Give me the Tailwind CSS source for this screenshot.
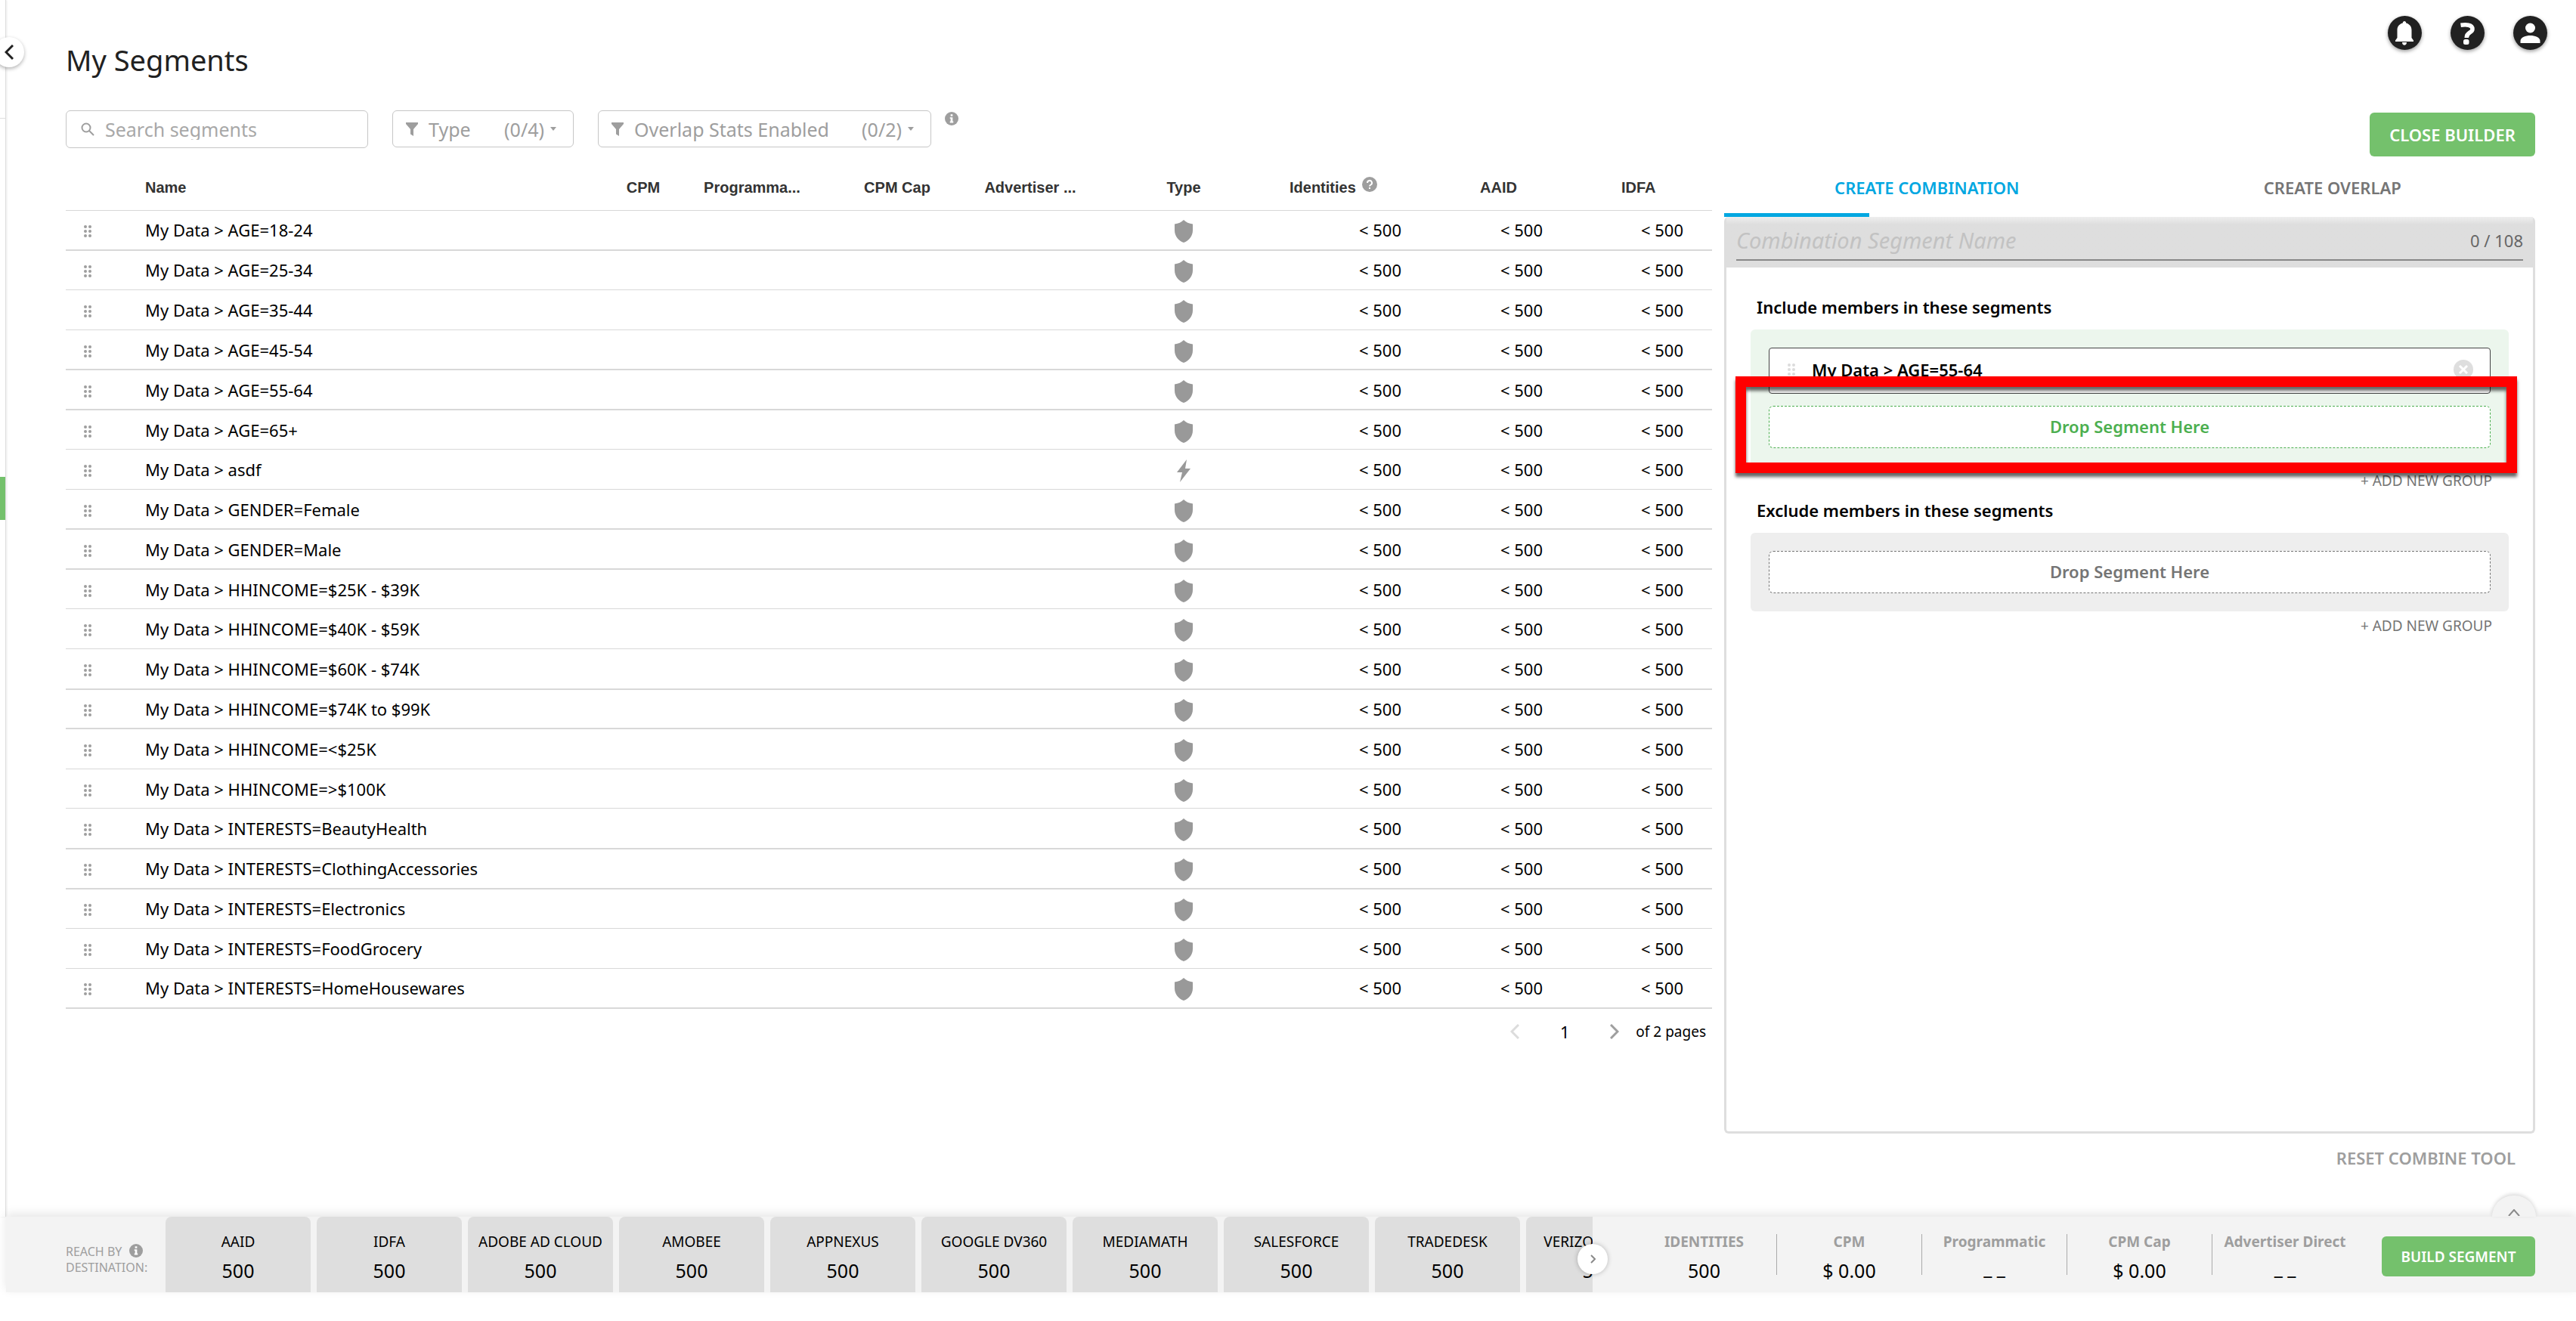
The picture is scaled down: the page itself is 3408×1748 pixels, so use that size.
<!DOCTYPE html>
<html lang="en">
<head>
  <meta charset="UTF-8" />
  <meta name="viewport" content="width=device-width, initial-scale=1" />
  <title>My Segments</title>
  <script src="https://cdn.jsdelivr.net/npm/@tailwindcss/browser@4"></script>
</head>
<body class="bg-white text-black font-['Noto_Sans','Open_Sans',sans-serif] text-[22px] leading-[30px] min-h-screen flex flex-col">

  <!-- shared icons -->
  <svg class="hidden">
    <symbol id="drag" viewBox="0 0 10 16"><circle cx="2" cy="2" r="2"/><circle cx="8" cy="2" r="2"/><circle cx="2" cy="8" r="2"/><circle cx="8" cy="8" r="2"/><circle cx="2" cy="14" r="2"/><circle cx="8" cy="14" r="2"/></symbol>
    <symbol id="shield" viewBox="0 0 24 30"><path d="M12 0c3 3 7 5 12 5.500v8c0 8-5 14-12 16.500C5 27.500 0 21.500 0 13.500v-8C5 5 9 3 12 0z"/></symbol>
    <symbol id="bolt" viewBox="0 0 20 30"><path d="M14 0L1 17h7L5 30l14-18h-7z"/></symbol>
    <symbol id="funnel" viewBox="0 0 16 18"><path d="M0 0h16v2l-6 7v9l-4-2.500V9L0 2z"/></symbol>
    <symbol id="info" viewBox="0 0 20 20"><circle cx="10" cy="10" r="10"/><path fill="#fff" d="M8.500 3.500h3v3h-3zM7.500 8h4v6h1v2h-5v-2h1v-4h-1z"/></symbol>
  </svg>

  <div class="flex flex-1">
    <!-- collapsed sidebar -->
    <aside class="relative w-2 shrink-0 border-r border-[#dedede] bg-white shadow-[1px_0_3px_rgba(0,0,0,.08)]">
      <button aria-label="Expand menu" class="absolute -left-2 top-[49px] size-10 rounded-full bg-white shadow-[0_2px_5px_rgba(0,0,0,.3)]">
        <svg class="absolute left-[14px] top-[10px] w-3 h-5" viewBox="0 0 12 20" fill="none" stroke="#212121" stroke-width="3"><path d="M11 1L2 10l9 9"/></svg>
      </button>
      <div class="absolute left-0 top-[156px] w-[7px] h-px bg-[#dedede]"></div>
      <div class="absolute left-0 top-[631px] w-[7px] h-[57px] bg-[#74c16c]"></div>
    </aside>

    <main class="flex-1 flex gap-4 pl-[79px] pr-[54px]">
      <!-- segment list -->
      <section class="flex-1 min-w-0 pt-[52px]">
        <h1 class="text-[38px] leading-[54px] text-[#212121]">My Segments</h1>

        <div class="flex items-start gap-8 mt-10 text-[#9e9e9e] text-[25px] leading-[28px]">
          <label class="flex items-center w-[400px] h-[50px] border border-[#c6c6c6] rounded-md pl-[19px]">
            <svg class="w-[18px] h-[18px] shrink-0" viewBox="0 0 18 18" fill="none" stroke="#9e9e9e" stroke-width="2"><circle cx="7" cy="7" r="5.500"/><path d="M11 11l6 6"/></svg>
            <input type="text" aria-label="Search segments" placeholder="Search segments" class="ml-[14px] w-full outline-none placeholder:text-[#a8a8a8]">
          </label>
          <button class="flex items-center w-[240px] h-[49px] border border-[#c6c6c6] rounded-md pl-[17px]">
            <svg class="w-4 h-[18px]" fill="#9e9e9e"><use href="#funnel"/></svg>
            <span class="ml-[14px]">Type</span>
            <span class="ml-auto">(0/4)</span>
            <svg class="w-2 h-[5px] ml-2 mr-[22px]" fill="#9e9e9e" viewBox="0 0 8 5"><path d="M0 0h8L4 5z"/></svg>
          </button>
          <div class="flex items-start gap-[18px]">
            <button class="flex items-center w-[441px] h-[49px] border border-[#c6c6c6] rounded-md pl-[17px]">
              <svg class="w-4 h-[18px]" fill="#9e9e9e"><use href="#funnel"/></svg>
              <span class="ml-[14px]">Overlap Stats Enabled</span>
              <span class="ml-auto">(0/2)</span>
              <svg class="w-2 h-[5px] ml-2 mr-[22px]" fill="#9e9e9e" viewBox="0 0 8 5"><path d="M0 0h8L4 5z"/></svg>
            </button>
            <svg class="size-[18px] mt-[2px]" fill="#9e9e9e"><use href="#info"/></svg>
          </div>
        </div>

        <table class="w-full table-fixed mt-[22px] h-[1117px]">
          <colgroup>
            <col class="w-[105px]"><col><col class="w-[130px]"><col class="w-[158px]"><col class="w-[226px]"><col class="w-[126px]"><col class="w-[264px]"><col class="w-[187px]"><col class="w-[187px]"><col class="w-[201px]">
          </colgroup>
          <thead class="font-['Liberation_Sans',sans-serif] text-[20px] text-[#333] whitespace-nowrap">
            <tr class="h-[60px] border-b border-[#d8d8d8]">
              <th></th>
              <th class="text-left">Name</th>
              <th>CPM</th>
              <th>Programma...</th>
              <th>CPM Cap</th>
              <th>Advertiser ...</th>
              <th class="pl-4">Type</th>
              <th class="pl-4">
                <span class="flex items-center gap-2">Identities
                  <svg class="size-5 mb-2" viewBox="0 0 20 20"><circle cx="10" cy="10" r="10" fill="#9e9e9e"/><path d="M7 8a3 3 0 1 1 4.500 2.500Q10 11.500 10 12.500M10 14v2" fill="none" stroke="#fff" stroke-width="2"/></svg>
                </span>
              </th>
              <th class="text-left pl-[81px]">AAID</th>
              <th class="text-left pl-[81px]">IDFA</th>
            </tr>
          </thead>
          <tbody id="rows"></tbody>
        </table>

        <div class="flex items-center justify-end mt-[15px] pr-2">
          <button aria-label="Previous page"><svg class="w-3 h-5" viewBox="0 0 12 20" fill="none" stroke="#dcdcdc" stroke-width="3"><path d="M11 1L2 10l9 9"/></svg></button>
          <span class="w-[120px] text-center">1</span>
          <button aria-label="Next page"><svg class="w-3 h-5" viewBox="0 0 12 20" fill="none" stroke="#9e9e9e" stroke-width="3"><path d="M1 1l9 9-9 9"/></svg></button>
          <span class="ml-[22px] text-[19px]">of 2 pages</span>
        </div>
      </section>

      <!-- builder -->
      <section class="w-[1073px] shrink-0 flex flex-col">
        <div class="flex justify-end gap-[38px] pt-[21px] -mr-4">
          <button aria-label="Notifications" class="size-[45px] rounded-full bg-[#212121] shadow-[0_2px_5px_rgba(0,0,0,.4)]">
            <svg class="size-full" viewBox="0 0 45 45" fill="#fff"><path d="M22 7c1.300 0 2.200 1 2.200 2.500 5 1.300 7.300 5 7.300 9.500v10l2.500 3.500V34H10v-1.500l2.500-3.500V19c0-4.500 2.300-8.200 7.300-9.500C19.800 8 20.700 7 22 7zM19 35h6c0 5-6 5-6 0z"/></svg>
          </button>
          <button aria-label="Help" class="size-[45px] rounded-full bg-[#212121] shadow-[0_2px_5px_rgba(0,0,0,.4)]">
            <svg class="size-full" viewBox="0 0 45 45"><path d="M13.500 12.300c6.500-1 15.500-1 15.500 5.200 0 5.500-7.800 3.500-7.800 11.500" fill="none" stroke="#fff" stroke-width="5.500"/><rect x="17" y="31" width="7.500" height="7" rx="2.500" fill="#fff"/></svg>
          </button>
          <button aria-label="Account" class="size-[45px] rounded-full bg-[#212121] shadow-[0_2px_5px_rgba(0,0,0,.4)]">
            <svg class="size-full" viewBox="0 0 45 45" fill="#fff"><circle cx="22.500" cy="16" r="6.500"/><path d="M9.500 36v-3c0-4.500 7-7 13-7s13 2.500 13 7v3z"/></svg>
          </button>
        </div>
        <button class="self-end mt-[83px] w-[219px] h-[58px] rounded-md bg-[#74c16c] text-white font-semibold">CLOSE BUILDER</button>

        <div class="flex mt-[10px] h-[70px] font-semibold">
          <button class="relative flex-1 text-[#00a7e1] pb-2">CREATE COMBINATION<span class="absolute left-0 bottom-0 w-[192px] h-[5px] bg-[#00a7e1]"></span></button>
          <button class="flex-1 text-[#757575] pb-2">CREATE OVERLAP</button>
        </div>

        <div class="h-[1213px] border-3 border-t-0 border-[#dedede] rounded-md">
          <div class="h-[67px] bg-linear-to-b from-[#eee] to-[#dedede] to-15% px-[13px] pt-[11px]">
            <div class="flex items-center h-[47px] border-b-2 border-[#888] pb-[6px]">
              <input type="text" aria-label="Combination Segment Name" placeholder="Combination Segment Name" class="flex-1 outline-none italic text-[29px] leading-[38px] placeholder:text-[#c2c2c2]">
              <span class="text-[#666]">0 / 108</span>
            </div>
          </div>

          <div class="px-8 pt-[37px]">
            <h2 class="font-semibold px-2">Include members in these segments</h2>
            <div class="relative mt-[15px] rounded-md bg-[#ecf6ed] p-6 flex flex-col gap-4">
              <div class="flex items-center h-[61px] border border-[#444] rounded-sm bg-white pl-6 pr-[22px] pb-1">
                <svg class="w-[10px] h-4" fill="#dcdcdc"><use href="#drag"/></svg>
                <span class="flex-1 ml-[22px] font-semibold">My Data &gt; AGE=55-64</span>
                <button aria-label="Remove segment"><svg class="size-[26px]" viewBox="0 0 26 26"><circle cx="13" cy="13" r="13" fill="#dedede"/><path d="M8 8l10 10M18 8L8 18" stroke="#fff" stroke-width="3"/></svg></button>
              </div>
              <div class="flex items-center justify-center h-14 border border-dashed border-[#4caf50] rounded-md bg-white text-[#4caf50] font-semibold pb-[2px]">Drop Segment Here</div>
              <!-- highlight over the drop zone -->
              <div class="absolute -left-5 -right-[11px] top-[62px] h-[128px] border-14 border-[#f00] shadow-[0_5px_4px_rgba(0,0,0,.6),inset_0_5px_4px_rgba(0,0,0,.6)]"></div>
            </div>
            <div class="flex justify-end mt-1 px-[22px]"><button class="text-[19px] text-[#757575]">+ ADD NEW GROUP</button></div>

            <h2 class="font-semibold px-2 mt-[9px]">Exclude members in these segments</h2>
            <div class="mt-[15px] rounded-md bg-[#eee] p-6">
              <div class="flex items-center justify-center h-14 border border-dashed border-[#757575] rounded-md bg-white text-[#757575] font-semibold pb-[2px]">Drop Segment Here</div>
            </div>
            <div class="flex justify-end mt-1 px-[22px]"><button class="text-[19px] text-[#757575]">+ ADD NEW GROUP</button></div>
          </div>
        </div>
        <button class="self-end mt-[17px] mr-[26px] font-semibold text-[#9e9e9e]">RESET COMBINE TOOL</button>
      </section>
    </main>
  </div>

  <!-- reach footer -->
  <footer class="relative h-[100px] ml-2 mb-[38px] flex bg-[#f3f3f3] shadow-[0_-4px_12px_rgba(0,0,0,.1)]">
    <button aria-label="Expand summary" class="absolute right-[53px] -top-7 w-[58px] h-7 rounded-t-full bg-[#f3f3f3] shadow-[0_-2px_5px_rgba(0,0,0,.15)]">
      <svg class="absolute left-[21px] top-[18px] w-4 h-[9px]" viewBox="0 0 16 9" fill="none" stroke="#8a8a8a" stroke-width="2"><path d="M1 9l7-8 7 8"/></svg>
    </button>
    <div class="w-[211px] shrink-0 pl-[79px] pt-9 text-[16px] leading-[21px] text-[#9e9e9e]">
      <div class="flex gap-[10px]">REACH BY <svg class="size-[18px]" fill="#9e9e9e"><use href="#info"/></svg></div>
      <div>DESTINATION:</div>
    </div>
    <div class="relative flex-1 min-w-0">
      <div id="destinations" class="flex gap-2 overflow-hidden h-full"></div>
      <button aria-label="More destinations" class="absolute -right-5 top-9 size-10 rounded-full bg-white shadow-[0_0_6px_rgba(0,0,0,.25)]">
        <svg class="absolute left-[17px] top-[14px] w-[7px] h-3" viewBox="0 0 7 12" fill="none" stroke="#8a8a8a" stroke-width="2"><path d="M1 1l5 5-5 5"/></svg>
      </button>
    </div>
    <div id="totals" class="flex py-[23px] ml-[52px] divide-x divide-[#aaa]"></div>
    <button class="self-start mt-[26px] ml-8 mr-[54px] w-[203px] h-[53px] rounded-md bg-[#74c16c] text-white text-[19px] font-semibold">BUILD SEGMENT</button>
  </footer>

  <script>
    const segments = [
      "AGE=18-24", "AGE=25-34", "AGE=35-44", "AGE=45-54", "AGE=55-64", "AGE=65+", "asdf",
      "GENDER=Female", "GENDER=Male", "HHINCOME=$25K - $39K", "HHINCOME=$40K - $59K",
      "HHINCOME=$60K - $74K", "HHINCOME=$74K to $99K", "HHINCOME=<$25K", "HHINCOME=>$100K",
      "INTERESTS=BeautyHealth", "INTERESTS=ClothingAccessories", "INTERESTS=Electronics",
      "INTERESTS=FoodGrocery", "INTERESTS=HomeHousewares"
    ];
    const destinations = ["AAID", "IDFA", "ADOBE AD CLOUD", "AMOBEE", "APPNEXUS", "GOOGLE DV360", "MEDIAMATH", "SALESFORCE", "TRADEDESK", "VERIZON MEDIA"];
    const totals = [["IDENTITIES", "500"], ["CPM", "$ 0.00"], ["Programmatic", ""], ["CPM Cap", "$ 0.00"], ["Advertiser Direct", ""]];

    const esc = (s) => s.replace(/</g, "&lt;").replace(/>/g, "&gt;");

    document.getElementById("rows").innerHTML = segments.map((name) => `
      <tr class="h-[52px] border-b border-[#d8d8d8] nth-[4n]:border-b-2 nth-[4n+1]:border-b-2">
        <td class="pl-6"><svg class="w-[10px] h-4 mt-1" fill="#9e9e9e"><use href="#drag"/></svg></td>
        <td>My Data &gt; ${esc(name)}</td>
        <td></td><td></td><td></td><td></td>
        <td class="pl-4"><svg class="w-6 h-[30px] mx-auto mt-1" fill="#999"><use href="#${name === "asdf" ? "bolt" : "shield"}"/></svg></td>
        <td class="text-right pr-[23px]">&lt; 500</td>
        <td class="text-right pr-[23px]">&lt; 500</td>
        <td class="text-right pr-[38px]">&lt; 500</td>
      </tr>`).join("");

    document.getElementById("destinations").innerHTML = destinations.map((name) => `
      <div class="w-[192px] shrink-0 rounded-t-lg bg-[#dedede] text-center pt-[18px] whitespace-nowrap">
        <div class="text-[19px]">${name}</div>
        <div class="text-[25px] leading-[36px] mt-[5px]">500</div>
      </div>`).join("");

    document.getElementById("totals").innerHTML = totals.map(([label, value]) => `
      <div class="w-[192px] text-center whitespace-nowrap">
        <div class="-mt-[5px] text-[19px] font-bold text-[#9e9e9e]">${label}</div>
        <div class="text-[25px] mt-[5px] ${value ? "leading-[36px]" : "leading-[28px]"}">${value || "_ _"}</div>
      </div>`).join("");
  </script>
</body>
</html>
